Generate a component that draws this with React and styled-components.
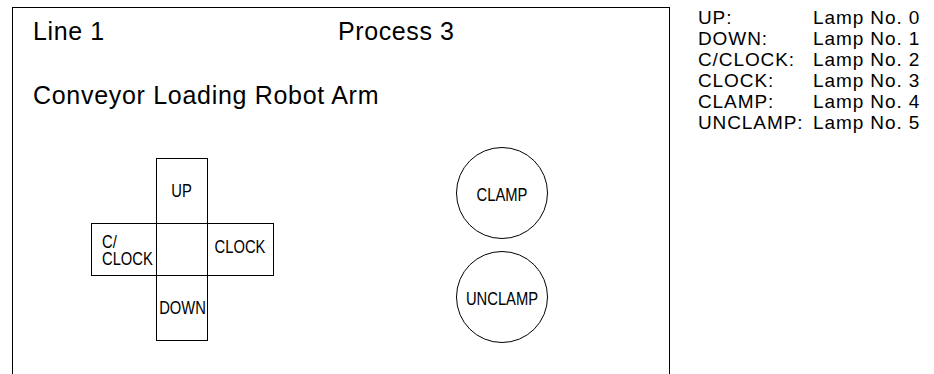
import React from "react";
import styled, { createGlobalStyle } from "styled-components";

const GlobalStyle = createGlobalStyle`
  body {
    margin: 0;
    background: #fff;
    color: #000;
    font-family: "Liberation Sans", Arial, sans-serif;
  }
`;

const lamps = [
  ["UP:", 0],
  ["DOWN:", 1],
  ["C/CLOCK:", 2],
  ["CLOCK:", 3],
  ["CLAMP:", 4],
  ["UNCLAMP:", 5],
];

const App = () => {
  return (
    <>
      <GlobalStyle />
      <Page>
        <Frame>
          <Header>
            <Heading>Line 1</Heading>
            <Heading>Process 3</Heading>
          </Header>
          <Title>Conveyor Loading Robot Arm</Title>
          <Panel>
            <Cross>
              <Cell $col={2} $row={1}>
                <Label>UP</Label>
              </Cell>
              <Cell $col={1} $row={2} $wrap>
                <Label $left>
                  C/
                  <br />
                  CLOCK
                </Label>
              </Cell>
              <Cell $col={3} $row={2} $lift>
                <Label>CLOCK</Label>
              </Cell>
              <Cell $col={2} $row={3}>
                <Label>DOWN</Label>
              </Cell>
            </Cross>
            <Buttons>
              <Round>
                <Label>CLAMP</Label>
              </Round>
              <Round>
                <Label>UNCLAMP</Label>
              </Round>
            </Buttons>
          </Panel>
        </Frame>
        <Legend>
          {lamps.map(([name, no]) => (
            <React.Fragment key={name}>
              <span>{name}</span>
              <span>Lamp No. {no}</span>
            </React.Fragment>
          ))}
        </Legend>
      </Page>
    </>
  );
};

const Page = styled.div`
  display: flex;
  align-items: flex-start;
  padding: 7px 0 0 12px;
  height: 367px;
  overflow: hidden;
`;

const Frame = styled.div`
  box-sizing: border-box;
  width: 658px;
  height: 400px;
  flex-shrink: 0;
  border: 1px solid #000;
  padding: 8px 0 0 20px;
  font-family: "Liberation Sans", Arial, sans-serif;
`;

const Header = styled.div`
  display: grid;
  grid-template-columns: 305px auto;
`;

const Heading = styled.div`
  font-size: 25px;
  line-height: 30px;
  letter-spacing: 0.6px;
`;

const Title = styled.div`
  margin-top: 34px;
  font-size: 25px;
  line-height: 30px;
  letter-spacing: 0.7px;
`;

const Panel = styled.div`
  display: flex;
  align-items: flex-start;
  margin-top: 37px;
  padding-left: 58px;
`;

const Cross = styled.div`
  display: grid;
  grid-template-columns: 65px 51px 66px;
  grid-template-rows: 65px 52px 65px;
  margin-top: 11px;
`;

const Cell = styled.div`
  box-sizing: border-box;
  grid-column: ${(p) => p.$col};
  grid-row: ${(p) => p.$row};
  width: calc(100% + 1px);
  height: calc(100% + 1px);
  border: 1px solid #000;
  display: flex;
  align-items: center;
  justify-content: ${(p) => (p.$wrap ? "flex-start" : "center")};
  padding-left: ${(p) => (p.$wrap ? "10px" : "0")};
  padding-bottom: ${(p) => (p.$lift ? "5px" : "0")};
  padding-top: ${(p) => (p.$wrap ? "3px" : "0")};
`;

const Label = styled.span`
  display: inline-block;
  font-family: "Liberation Sans", Arial, sans-serif;
  font-size: 18px;
  line-height: 17px;
  white-space: nowrap;
  transform: scaleX(0.82);
  transform-origin: ${(p) => (p.$left ? "left center" : "center")};
`;

const Buttons = styled.div`
  display: flex;
  flex-direction: column;
  gap: 12px;
  margin-left: 183px;
`;

const Round = styled.div`
  box-sizing: border-box;
  width: 92px;
  height: 92px;
  border: 1px solid #000;
  border-radius: 50%;
  display: flex;
  align-items: center;
  justify-content: center;
  padding-top: 4px;
`;

const Legend = styled.div`
  display: grid;
  grid-template-columns: 115px auto;
  margin-left: 28px;
  font-family: "Liberation Sans", Arial, sans-serif;
  font-size: 19px;
  line-height: 21px;
  letter-spacing: 0.9px;
  white-space: nowrap;
`;

export default App;
